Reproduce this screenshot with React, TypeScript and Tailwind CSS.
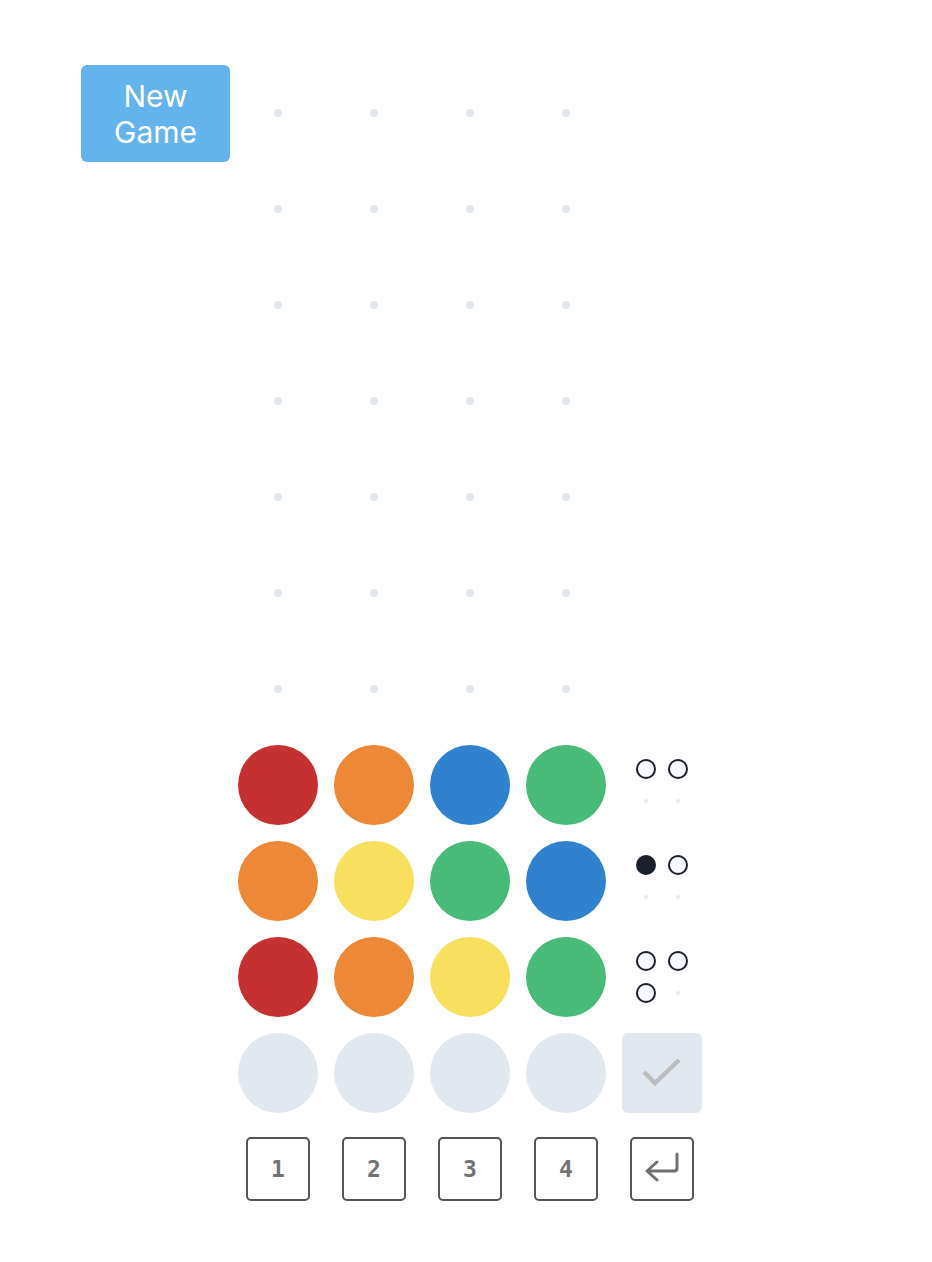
import React from "react";

const C: Record<string, string> = {
  r: "bg-[#c53030]",
  o: "bg-[#ed8936]",
  b: "bg-[#3182ce]",
  g: "bg-[#48bb78]",
  y: "bg-[#f6e05e]",
  e: "bg-[#e2e8f0]",
};

const guesses: { c: string[]; p: string[] }[] = [
  { c: ["r", "o", "b", "g"], p: ["w", "w", "n", "n"] },
  { c: ["o", "y", "g", "b"], p: ["k", "w", "n", "n"] },
  { c: ["r", "o", "y", "g"], p: ["w", "w", "w", "n"] },
];

function Peg({ t }: { t: string }) {
  return (
    <div className="w-8 h-8 flex items-center justify-center">
      {t === "w" && <div className="w-5 h-5 rounded-full border-2 border-[#1a202c] bg-[#f7fafc]" />}
      {t === "k" && <div className="w-5 h-5 rounded-full border-2 border-[#1a202c] bg-[#1a202c]" />}
      {t === "n" && <div className="w-1 h-1 rounded-full bg-[#e2e8f0]" />}
    </div>
  );
}

function Key({ children }: { children: React.ReactNode }) {
  return (
    <div className="w-20 h-20 flex items-center justify-center">
      <div
        className="w-16 h-16 border-2 border-[#555555] rounded-[5px] flex items-center justify-center text-[#737373] text-[23px] font-bold leading-none"
        style={{ fontFamily: '"DejaVu Sans Mono", monospace' }}
      >
        {children}
      </div>
    </div>
  );
}

export default function App() {
  return (
    <div className="min-h-[1262px] bg-white pt-[65px] pl-[81px] flex items-start gap-2" style={{ fontFamily: "Inter, sans-serif" }}>
      <button className="w-[149px] h-[97px] bg-[#63b3ed] text-white rounded-[6px] text-[30px] leading-[36px] flex flex-col items-center justify-center">
        <span>New</span>
        <span>Game</span>
      </button>
      <div className="mt-[8px] flex flex-col gap-4">
        {Array.from({ length: 7 }).map((_, i) => (
          <div key={i} className="flex gap-4">
            {[0, 1, 2, 3].map((j) => (
              <div key={j} className="w-20 h-20 flex items-center justify-center">
                <div className="w-2 h-2 rounded-full bg-[#e2e8f0]" />
              </div>
            ))}
            <div className="w-20 h-20" />
          </div>
        ))}
        {guesses.map((g, i) => (
          <div key={"g" + i} className="flex gap-4">
            {g.c.map((c, j) => (
              <div key={j} className={"w-20 h-20 rounded-full " + C[c]} />
            ))}
            <div className="w-20 h-20 p-2 grid grid-cols-2">
              {g.p.map((p, j) => (
                <Peg key={j} t={p} />
              ))}
            </div>
          </div>
        ))}
        <div className="flex gap-4">
          {[0, 1, 2, 3].map((j) => (
            <div key={j} className="w-20 h-20 rounded-full bg-[#e2e8f0]" />
          ))}
          <div className="w-20 h-20 rounded-[6px] bg-[#e2e8f0] flex items-center justify-center">
            <svg width="42" height="32" viewBox="0 0 42 32" fill="none">
              <path d="M3 15 L14 26 L38 3" stroke="#bdbdbd" strokeWidth="4.5" />
            </svg>
          </div>
        </div>
        <div className="flex gap-4">
          <Key>1</Key>
          <Key>2</Key>
          <Key>3</Key>
          <Key>4</Key>
          <Key>
            <svg width="40" height="40" viewBox="0 0 40 40" fill="none">
              <path d="M35 5 V19 Q35 22 32 22 H5 M15 13 L5 22 L15 31" stroke="#707070" strokeWidth="3" strokeLinecap="round" strokeLinejoin="round" />
            </svg>
          </Key>
        </div>
      </div>
    </div>
  );
}
